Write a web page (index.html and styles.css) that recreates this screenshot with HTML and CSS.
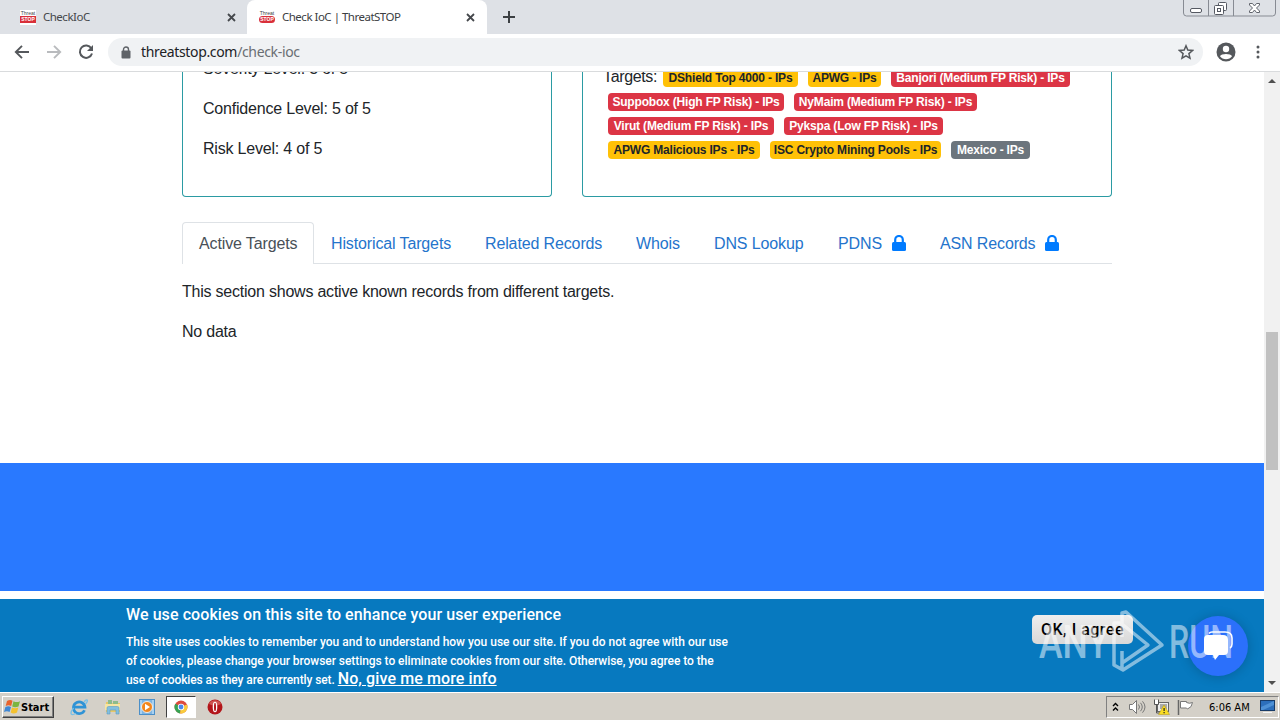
FILE: index.html
```
<!DOCTYPE html>
<html lang="en">

<head>
    <meta charset="UTF-8">
    <title>Check IoC | ThreatSTOP</title>
    <link rel="stylesheet" href="styles.css">
</head>

<body>
    <div class="tabstrip">
        <div class="tab">
            <div class="favicon"><span>Threat</span><b>STOP</b></div>
            <span class="tab-title">CheckIoC</span>
            <svg class="close" width="9" height="9" viewBox="0 0 9 9"><path d="M1 1l7 7M8 1l-7 7" stroke="#45484c" stroke-width="1.8"/></svg>
        </div>
        <div class="tab active">
            <div class="favicon round"><span>Threat</span><b>STOP</b></div>
            <span class="tab-title">Check IoC | ThreatSTOP</span>
            <svg class="close" width="9" height="9" viewBox="0 0 9 9"><path d="M1 1l7 7M8 1l-7 7" stroke="#45484c" stroke-width="1.8"/></svg>
        </div>
        <svg class="plus" width="12" height="12" viewBox="0 0 12 12"><path d="M6 0v12M0 6h12" stroke="#3c4043" stroke-width="2"/></svg>
        <svg class="win-btns" width="94" height="18" viewBox="0 0 94 18" fill="none">
            <path d="M.5 0v13q0 3 3 3h86q3 0 3-3V0M25.500 0v16M50.500 0v16" stroke="#878b93"/>
            <rect x="7.500" y="8.500" width="11" height="4" rx="1.500" fill="#fff" stroke="#555962"/>
            <rect x="35.500" y="2.500" width="8" height="8" rx="1" fill="#fff" stroke="#555962"/>
            <rect x="31.500" y="5.500" width="9" height="9" rx="1" fill="#fff" stroke="#555962"/>
            <rect x="34.500" y="8.500" width="3" height="3" stroke="#555962"/>
            <path d="M66.500 3.500h3l2 2.500 2-2.500h3v1.500l-3 3 3 3v1.500h-3l-2-2.500-2 2.500h-3V11l3-3-3-3z" fill="#fff" stroke="#60646c"/>
        </svg>
    </div>

    <div class="toolbar">
        <svg width="16" height="14" viewBox="0 0 16 14" fill="none" stroke="#55585c" stroke-width="1.900"><path d="M15 7H2M8 .8L1.800 7 8 13.200"/></svg>
        <svg width="16" height="14" viewBox="0 0 16 14" fill="none" stroke="#b9bbbe" stroke-width="1.900"><path d="M1 7h13M8 .8L14.200 7 8 13.200"/></svg>
        <svg width="16" height="16" viewBox="0 0 16 16" fill="none" stroke="#55585c" stroke-width="2"><path d="M13.300 4.300A6.200 6.200 0 1 0 14 9.500"/><path d="M15 1v6H9z" fill="#55585c" stroke="none"/></svg>
        <div class="omnibox">
            <svg width="10" height="13" viewBox="0 0 10 13"><path d="M2.500 5V3.500a2.500 2.500 0 0 1 5 0V5" fill="none" stroke="#5f6368" stroke-width="1.400"/><rect x=".5" y="4.500" width="9" height="8" rx="1" fill="#5f6368"/></svg>
            <span class="url">threatstop.com<span class="path">/check-ioc</span></span>
            <svg class="star" width="16" height="16" viewBox="0 0 16 16"><path d="M8 1.800l1.800 4.300 4.700.4-3.600 3.100 1.100 4.600L8 11.800l-4 2.400 1.100-4.600-3.600-3.100 4.700-.4z" fill="none" stroke="#55585c" stroke-width="1.500"/></svg>
        </div>
        <svg class="profile" width="20" height="20" viewBox="0 0 20 20"><circle cx="10" cy="10" r="9.500" fill="#55585c"/><circle cx="10" cy="7" r="3.200" fill="#fff"/><path d="M4 14.200c1-2.800 11-2.800 12 0-2.500 4-9.500 4-12 0z" fill="#fff"/></svg>
        <svg class="dots" width="4" height="14" viewBox="0 0 4 14" fill="#55585c"><circle cx="2" cy="2" r="1.500"/><circle cx="2" cy="7" r="1.500"/><circle cx="2" cy="12" r="1.500"/></svg>
    </div>

    <div class="viewport">
        <div class="page">
            <div class="cards">
                <div class="card left">
                    <p class="severity">Severity Level: 3 of 5</p>
                    <p class="confidence">Confidence Level: 5 of 5</p>
                    <p class="risk">Risk Level: 4 of 5</p>
                </div>
                <div class="card right">
                    <div class="badges first">
                        <span class="targets">Targets:</span>
                        <span class="badge warning w135">DShield Top 4000 - IPs</span>
                        <span class="badge warning w73">APWG - IPs</span>
                        <span class="badge danger w179">Banjori (Medium FP Risk) - IPs</span>
                    </div>
                    <div class="badges">
                        <span class="badge danger w176">Suppobox (High FP Risk) - IPs</span>
                        <span class="badge danger w183">NyMaim (Medium FP Risk) - IPs</span>
                    </div>
                    <div class="badges">
                        <span class="badge danger w166">Virut (Medium FP Risk) - IPs</span>
                        <span class="badge danger w160">Pykspa (Low FP Risk) - IPs</span>
                    </div>
                    <div class="badges">
                        <span class="badge warning w152">APWG Malicious IPs - IPs</span>
                        <span class="badge warning w171">ISC Crypto Mining Pools - IPs</span>
                        <span class="badge secondary w79">Mexico - IPs</span>
                    </div>
                </div>
            </div>

            <ul class="nav-tabs">
                <li class="current">Active Targets</li>
                <li class="historical">Historical Targets</li>
                <li class="related">Related Records</li>
                <li class="whois">Whois</li>
                <li class="dns">DNS Lookup</li>
                <li class="pdns">PDNS <svg width="14" height="16" viewBox="0 0 14 16"><path d="M3.200 8V4.800a3.800 3.800 0 0 1 7.600 0V8" fill="none" stroke="#007bff" stroke-width="2.200"/><rect y="7" width="14" height="9" rx="1.500" fill="#007bff"/></svg></li>
                <li class="asn">ASN Records <svg width="14" height="16" viewBox="0 0 14 16"><path d="M3.200 8V4.800a3.800 3.800 0 0 1 7.600 0V8" fill="none" stroke="#007bff" stroke-width="2.200"/><rect y="7" width="14" height="9" rx="1.500" fill="#007bff"/></svg></li>
            </ul>

            <div class="tab-content">
                <p class="intro">This section shows active known records from different targets.</p>
                <p class="nodata">No data</p>
            </div>

            <div class="band"></div>

            <div class="cookies">
                <div class="cookie-text">
                    <h2>We use cookies on this site to enhance your user experience</h2>
                    <p>
                        <span class="line1">This site uses cookies to remember you and to understand how you use our site. If you do not agree with our use</span><br>
                        <span class="line2">of cookies, please change your browser settings to eliminate cookies from our site. Otherwise, you agree to the</span><br>
                        <span class="line3">use of cookies as they are currently set.</span> <a>No, give me more info</a>
                    </p>
                </div>
                <button class="agree">OK, I agree</button>
            </div>
        </div>

        <div class="scrollbar">
            <svg width="8" height="4" viewBox="0 0 8 4"><path d="M0 4l4-4 4 4z" fill="#505050"/></svg>
            <div class="thumb"></div>
            <svg width="8" height="4" viewBox="0 0 8 4"><path d="M0 0l4 4 4-4z" fill="#505050"/></svg>
        </div>
    </div>

    <div class="taskbar">
        <div class="start">
            <svg width="17" height="16" viewBox="0 0 17 16">
                <path d="M3 2q3-2 5.500-.3L7.200 7Q4.500 5.500 1.700 7z" fill="#e8622c"/>
                <path d="M9.500 2.200Q12.500 4 16 2.200L14.500 7.400Q11 9 8.200 7.400z" fill="#7bb541"/>
                <path d="M1.400 8Q4.500 6.500 7 8L5.600 13Q3 11.500 0 13z" fill="#3f87d4"/>
                <path d="M8 8.500q3 1.500 6.300 0L13 13.500q-3.500 1.800-6.300 0z" fill="#f4c12e"/>
            </svg>
            <span>Start</span>
        </div>
        <div class="launch">
            <svg width="18" height="18" viewBox="0 0 18 18" fill="none">
                <path d="M14.500 12.200A5.800 5.800 0 1 1 15 9.200H4.500" stroke="#2f93d6" stroke-width="2.700"/>
                <path d="M14 4C17 0 19 2 15.500 6M3.500 10C-1 16 1 18 6 15.500" stroke="#78c0e8" stroke-width="1.300"/>
            </svg>
        </div>
        <div class="launch">
            <svg width="18" height="16" viewBox="0 0 18 16">
                <path d="M2 3h5l1 1h8v9H2z" fill="#e7c866"/><path d="M4 1h4v4H4zM9 2h5v3H9z" fill="#8dbb8b"/>
                <path d="M1 5h15v6H1z" fill="#f6e5a3"/><path d="M3 15V9q0-1.500 1.500-1.500h9Q15 7.500 15 9v6h-3v-4H6v4z" fill="#83bfdf" stroke="#5a9cc4" stroke-width=".6"/>
            </svg>
        </div>
        <div class="launch">
            <svg width="16" height="16" viewBox="0 0 16 16">
                <rect x=".5" y=".5" width="15" height="15" fill="#a9d0ef" stroke="#4b8fc8"/><rect x="3" y="1" width="10" height="14" fill="#7eb5e2"/>
                <circle cx="8" cy="8" r="5.500" fill="#f2861c" stroke="#fff" stroke-width=".8"/><path d="M6 4.800v6.400L11 8z" fill="#fff"/>
            </svg>
        </div>
        <div class="launch pressed">
            <svg width="14" height="14" viewBox="0 0 14 14">
                <circle cx="7" cy="7" r="6.500" fill="#dd4b3e"/>
                <path d="M7 7L1.300 3.800A6.500 6.500 0 0 0 6 13.400z" fill="#35a353"/>
                <path d="M7 7l5.900-2.600A6.500 6.500 0 0 1 6 13.400z" fill="#f9cb3c"/>
                <circle cx="7" cy="7" r="3.200" fill="#fff"/><circle cx="7" cy="7" r="2.400" fill="#4a87ec"/>
            </svg>
        </div>
        <div class="launch">
            <svg width="16" height="16" viewBox="0 0 16 16">
                <circle cx="8" cy="8" r="7.500" fill="#b3151a"/><path d="M2 5a6.700 6.700 0 0 1 12 0q-6 3-12 0" fill="#cf5552"/>
                <ellipse cx="8" cy="8" rx="2.300" ry="5.300" fill="#fff"/><ellipse cx="8" cy="8" rx="1" ry="4.300" fill="#b3151a"/>
            </svg>
        </div>

        <div class="tray">
            <svg width="7" height="10" viewBox="0 0 7 10" fill="none" stroke="#000" stroke-width="1.400"><path d="M1 4l2.500-2.500L6 4M1 8.500L3.500 6 6 8.500"/></svg>
            <svg class="speaker" width="17" height="14" viewBox="0 0 17 14" fill="none" stroke="#777"><path d="M.5 4.500h3l4-4v13l-4-4h-3z" fill="#fff"/><path d="M9.500 4.500q2 2.500 0 5M11.500 2.800q3.500 4.200 0 8.400M13.500 1.300q5 5.700 0 11.400"/></svg>
            <svg class="network" width="17" height="16" viewBox="0 0 17 16">
                <rect x="4.500" y="3.500" width="11" height="9" fill="#eee" stroke="#666"/><rect x="7" y="5" width="7" height="5" fill="#aaa"/>
                <path d="M1.500.5v5h4v-5M3.500 5v9h4" fill="none" stroke="#555"/><path d="M2 1h3v4H2z" fill="#fff"/>
                <path d="M11 6l5.500 9.500h-11z" fill="#fadd23" stroke="#b39510" stroke-width=".5"/><path d="M10.500 9h1.200v3h-1.200zM10.500 13h1.200v1.200h-1.200z" fill="#222"/>
            </svg>
            <svg class="flag" width="17" height="15" viewBox="0 0 17 15"><path d="M1.500 0v15" stroke="#666" stroke-width="1.500"/><path d="M3.500 1.500h6v1q3 1.500 6 0-.500 5-5 6.500l-1-1h-6z" fill="#fff" stroke="#777"/></svg>
            <span class="clock">6:06 AM</span>
            <svg class="desktop" width="15" height="14" viewBox="0 0 15 14"><rect x=".5" y=".5" width="14" height="10" fill="#2c6fbb" stroke="#183c68"/><path d="M1 7l13-6v4L3 10H1z" fill="#4e91d5"/><path d="M3 12h9v1H3z" fill="#f5f5f5"/></svg>
        </div>
    </div>

    <!-- chat bubble and watermark float over the page -->
    <div class="chat">
        <svg width="34" height="32" viewBox="0 0 34 32">
            <path d="M8 3.500q1-1.500 3-1.500h13q7 0 7 6v6q0 3-2 4" fill="none" stroke="#fff" stroke-width="1.600"/>
            <path d="M7 5h15q5 0 5 5v11q0 4-4 4h-5l-4 5-2-5H7q-4 0-4-4V9q0-4 4-4z" fill="#fff"/>
        </svg>
    </div>
    <svg class="watermark" width="200" height="66" viewBox="0 0 200 66">
        <g class="mark-text">
            <text x="1" y="49" textLength="70" lengthAdjust="spacingAndGlyphs">ANY</text>
            <text x="131" y="49" textLength="64" lengthAdjust="spacingAndGlyphs">RUN</text>
        </g>
        <path d="M84 28V4l4-1 36 33-39 25-9-5V14h8M84 15l26 21-26 18V42M84 61V47" fill="none" stroke="#fff" stroke-opacity=".5" stroke-width="3.500" stroke-linejoin="round"/>
    </svg>
</body>

</html>
```
FILE: styles.css
```
* {
    box-sizing: border-box;
}

body {
    margin: 0;
    width: 1280px;
    height: 720px;
    overflow: hidden;
    background: #fff;
    color: #212529;
    font-family: "Liberation Sans", Arial, sans-serif;
    font-size: 16px;
    line-height: 24px;
    display: flex;
    flex-direction: column;
}

svg {
    display: block;
    flex: none;
}

p,
ul,
h2 {
    margin: 0;
    padding: 0;
}

.tabstrip {
    height: 34px;
    flex: none;
    display: flex;
    background: #dee1e6;
    font-family: "Noto Sans", sans-serif;
    font-size: 11.5px;
    color: #45484c;
}

.tab {
    width: 247px;
    display: flex;
    align-items: center;
    padding: 0 11px 0 20px;
    white-space: nowrap;
}

.tab.active {
    width: 240px;
    padding: 0 12px 0 12px;
    background: #fff;
    border-radius: 8px 8px 0 0;
    color: #3c4043;
}

.tab-title {
    letter-spacing: -0.5px;
}

.favicon {
    width: 16px;
    height: 15px;
    margin-right: 7px;
    background: #fff;
    text-align: center;
    overflow: hidden;
    font: 5px/6px "Liberation Sans", sans-serif;
    flex: none;
}

.favicon span,
.favicon b {
    display: block;
}

.favicon b {
    height: 7px;
    line-height: 7px;
    background: #d9303a;
    color: #fff;
}

.favicon.round b {
    border-radius: 4px;
}

.close {
    margin-left: auto;
}

.plus {
    margin: 11px 0 0 16px;
}

.win-btns {
    margin-left: auto;
    margin-right: 3px;
}

.toolbar {
    height: 38px;
    flex: none;
    display: flex;
    align-items: center;
    gap: 16px;
    padding: 0 20px 1px 14px;
    border-bottom: 1px solid #d9dbdd;
}

.omnibox {
    width: 1095px;
    height: 28px;
    margin-left: -2px;
    padding: 0 9px 0 13px;
    background: #f0f2f4;
    border-radius: 14px;
    display: flex;
    align-items: center;
}

.url {
    margin-left: 10px;
    font-family: "Noto Sans", sans-serif;
    font-size: 14px;
    letter-spacing: -0.34px;
    color: #202124;
}

.path {
    color: #6a6e73;
}

.star {
    margin-left: auto;
}

.profile {
    margin-left: -3px;
}

.dots {
    margin-left: auto;
}

.viewport {
    height: 620px;
    flex: none;
    display: flex;
    border-bottom: 1px solid #e8e8e4;
}

.page {
    width: 1264px;
    height: 620px;
    overflow: hidden;
    display: flex;
    flex-direction: column;
}

.cards {
    height: 125px;
    flex: none;
    margin: 0 152px 25px 182px;
    display: flex;
    gap: 30px;
    overflow: hidden;
}

.card {
    display: flex;
    flex-direction: column;
    justify-content: flex-end;
    border: 1px solid #2b9ba3;
    border-top: 0;
    border-radius: 0 0 4px 4px;
    height: 125px;
}

.left {
    width: 370px;
    gap: 16px;
    padding: 0 20px 35px;
    letter-spacing: -0.2px;
}

.right {
    width: 530px;
    padding: 0 20px 34px 25px;
}

.badges {
    display: flex;
    gap: 10px;
    height: 24px;
    flex: none;
    align-items: center;
    white-space: nowrap;
}

.targets {
    width: 54px;
    height: 26px;
    margin: 0 -4px 0 -5px;
    letter-spacing: -0.35px;
}

.badge {
    height: 18px;
    border-radius: 4px;
    text-align: center;
    font-size: 12px;
    font-weight: bold;
    letter-spacing: -0.18px;
    line-height: 18px;
    flex: none;
}

.warning {
    background: #ffc107;
}

.danger {
    background: #dc3545;
    color: #fff;
}

.secondary {
    background: #6c757d;
    color: #fff;
}

.w135 { width: 135px; }
.w73 { width: 73px; }
.w179 { width: 179px; }
.w176 { width: 176px; }
.w183 { width: 183px; }
.w166 { width: 166px; }
.w160 { width: 159px; }
.w152 { width: 152px; }
.w171 { width: 171px; }
.w79 { width: 79px; }

.nav-tabs {
    height: 42px;
    flex: none;
    margin: 0 152px 0 182px;
    display: flex;
    list-style: none;
    border-bottom: 1px solid #dee2e6;
    color: #2474cc;
    letter-spacing: -0.13px;
    white-space: nowrap;
}

.nav-tabs li {
    height: 42px;
    padding: 10px 16px 7px 17px;
    display: flex;
}

.nav-tabs svg {
    margin: 3px 0 0 9px;
}

.nav-tabs .current {
    width: 132px;
    padding: 9px 16px 7px;
    border: 1px solid #dee2e6;
    border-bottom: 0;
    border-radius: 4px 4px 0 0;
    background: #fff;
    color: #495057;
}

.historical { width: 154px; }
.related { width: 151px; }
.whois { width: 78px; }
.dns { width: 124px; }
.pdns { width: 102px; }
.asn { width: 152px; }

.nav-tabs .pdns svg {
    margin-left: 10px;
}

.tab-content {
    height: 199px;
    flex: none;
    padding: 16px 182px 0;
    letter-spacing: -0.22px;
}

.nodata {
    margin-top: 16px;
}

.band {
    height: 128px;
    flex: none;
    margin-bottom: 8px;
    background: #2979ff;
}

.cookies {
    height: 93px;
    flex: none;
    padding: 0 131px 0 126px;
    background: #0779bf;
    color: #fff;
    display: flex;
    justify-content: space-between;
    font-family: Roboto, sans-serif;
    white-space: nowrap;
}

.cookies h2 {
    font-size: 16px;
    line-height: 20px;
    font-weight: 500;
    padding-top: 6px;
    letter-spacing: 0.08px;
}

.cookies p {
    margin-top: 8px;
    font-size: 12px;
    line-height: 19px;
    font-weight: 500;
}

.line2 {
    letter-spacing: -0.055px;
}

.line3 {
    letter-spacing: -0.1px;
}

.cookies a {
    font-size: 16px;
    line-height: 0;
    letter-spacing: 0.1px;
    text-decoration: underline;
}

.agree {
    width: 101px;
    height: 29px;
    margin-top: 16px;
    padding: 0;
    border: 0;
    border-radius: 5px;
    background: linear-gradient(#eee, #d8d8d8);
    color: #000;
    font: 500 16px Roboto, sans-serif;
    letter-spacing: 0.5px;
}

.scrollbar {
    width: 16px;
    height: 620px;
    background: #f1f1f1;
    display: flex;
    flex-direction: column;
    align-items: center;
    justify-content: space-between;
    padding: 7px 0;
}

.thumb {
    width: 12px;
    height: 138px;
    margin-bottom: -37px;
    background: #c1c1c1;
}

.taskbar {
    height: 28px;
    flex: none;
    background: #d4d0c8;
    display: flex;
    align-items: center;
    border-top: 1px solid #fff;
    padding: 2px 1px 1px 2px;
}

.start {
    width: 52px;
    height: 22px;
    margin-right: 10px;
    border: 1px solid #fff;
    border-right-color: #404040;
    border-bottom-color: #404040;
    box-shadow: inset -1px -1px #808080;
    display: flex;
    align-items: center;
    padding-left: 1px;
    font: bold 11px "DejaVu Sans Condensed", "DejaVu Sans", sans-serif;
    color: #000;
}

.launch {
    width: 30px;
    height: 22px;
    margin-right: 4px;
    flex: none;
    display: flex;
    align-items: center;
    justify-content: center;
}

.pressed {
    border: 1px solid #404040;
    border-right-color: #fff;
    border-bottom-color: #fff;
    background: #fff;
}

.tray {
    width: 173px;
    height: 22px;
    margin-left: auto;
    border: 1px solid #808080;
    border-right-color: #fff;
    border-bottom-color: #fff;
    display: flex;
    align-items: center;
    padding-left: 5px;
    color: #000;
}

.speaker {
    margin-left: 10px;
}

.network,
.flag {
    margin-left: 7px;
}

.clock {
    width: 42px;
    margin-left: 15px;
    font: 11px "DejaVu Sans Condensed", "DejaVu Sans", sans-serif;
    white-space: nowrap;
}

.desktop {
    margin-left: 9px;
}

.chat {
    position: absolute;
    left: 1188px;
    top: 616px;
    width: 60px;
    height: 60px;
    border-radius: 50%;
    background: #2b70fb;
    box-shadow: 0 1px 12px rgba(0, 0, 0, 0.2);
    display: flex;
    align-items: center;
    justify-content: center;
}

.watermark {
    position: absolute;
    left: 1038px;
    top: 609px;
}

.mark-text {
    font: 500 47px Roboto, sans-serif;
    fill: #fff;
    fill-opacity: 0.5;
}
```
